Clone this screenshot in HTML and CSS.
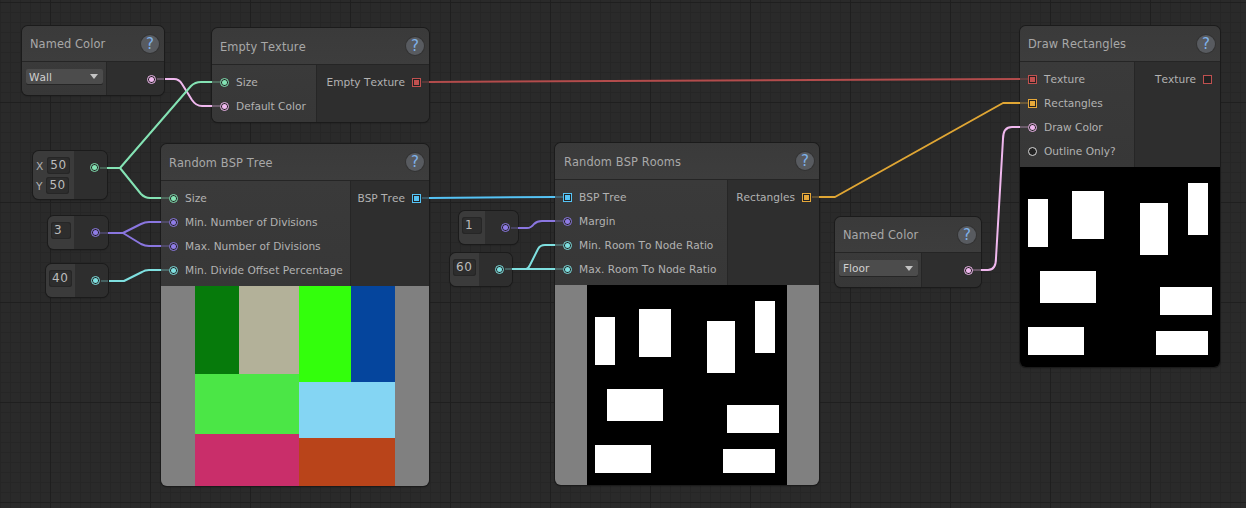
FILE: index.html
```html
<!DOCTYPE html>
<html lang="en">
<head>
  <meta charset="UTF-8">
  <meta name="viewport" content="width=device-width, initial-scale=1.0">
  <title>Texture Graph</title>
  <link rel="stylesheet" href="styles.css">
</head>
<body>

<div class="canvas">

  <div class="node n-wall">
    <div class="head"><span>Named Color</span><span class="help">?</span></div>
    <div class="body">
      <div class="left left-pick"><div class="pick"><span>Wall</span><i class="caret"></i></div></div>
      <div class="right"><div class="row"><span class="port c-pink"></span></div></div>
    </div>
  </div>

  <div class="node n-empty">
    <div class="head"><span>Empty Texture</span><span class="help">?</span></div>
    <div class="body">
      <div class="left">
        <div class="row"><span class="port c-mint"></span>Size</div>
        <div class="row"><span class="port c-pink"></span>Default Color</div>
      </div>
      <div class="right"><div class="row">Empty Texture<span class="port sq c-red"></span></div></div>
    </div>
  </div>

  <div class="node small n-xy">
    <div class="left vec">
      <div class="axis">X<span class="field">50</span></div>
      <div class="axis">Y<span class="field">50</span></div>
    </div>
    <div class="right mid"><span class="port c-mint"></span></div>
  </div>

  <div class="node small n-three">
    <div class="left top"><span class="field w-20">3</span></div>
    <div class="right mid"><span class="port c-purple"></span></div>
  </div>

  <div class="node small n-forty">
    <div class="left top"><span class="field">40</span></div>
    <div class="right mid"><span class="port c-cyan"></span></div>
  </div>

  <div class="node n-tree">
    <div class="head"><span>Random BSP Tree</span><span class="help">?</span></div>
    <div class="body">
      <div class="left">
        <div class="row"><span class="port c-mint"></span>Size</div>
        <div class="row"><span class="port c-purple"></span>Min. Number of Divisions</div>
        <div class="row"><span class="port c-purple"></span>Max. Number of Divisions</div>
        <div class="row"><span class="port c-cyan"></span>Min. Divide Offset Percentage</div>
      </div>
      <div class="right"><div class="row">BSP Tree<span class="port sq c-blue"></span></div></div>
    </div>
    <div class="preview gray">
      <div class="tex">
        <div class="cell" style="left:0;top:0;width:44px;height:88px;background:#067a0b"></div>
        <div class="cell" style="left:44px;top:0;width:60px;height:88px;background:#b3b199"></div>
        <div class="cell" style="left:104px;top:0;width:52px;height:96px;background:#33ff0c"></div>
        <div class="cell" style="left:156px;top:0;width:44px;height:96px;background:#05459d"></div>
        <div class="cell" style="left:0;top:88px;width:104px;height:60px;background:#4be646"></div>
        <div class="cell" style="left:104px;top:96px;width:96px;height:56px;background:#84d5f3"></div>
        <div class="cell" style="left:0;top:148px;width:104px;height:52px;background:#c92e6a"></div>
        <div class="cell" style="left:104px;top:152px;width:96px;height:48px;background:#b9441a"></div>
      </div>
    </div>
  </div>

  <div class="node small n-one">
    <div class="left top"><span class="field w-20">1</span></div>
    <div class="right mid"><span class="port c-purple"></span></div>
  </div>

  <div class="node small n-sixty">
    <div class="left top"><span class="field">60</span></div>
    <div class="right mid"><span class="port c-cyan"></span></div>
  </div>

  <div class="node n-rooms">
    <div class="head"><span>Random BSP Rooms</span><span class="help">?</span></div>
    <div class="body">
      <div class="left">
        <div class="row"><span class="port sq c-blue"></span>BSP Tree</div>
        <div class="row"><span class="port c-purple"></span>Margin</div>
        <div class="row"><span class="port c-cyan"></span>Min. Room To Node Ratio</div>
        <div class="row"><span class="port c-cyan"></span>Max. Room To Node Ratio</div>
      </div>
      <div class="right"><div class="row">Rectangles<span class="port sq c-orange"></span></div></div>
    </div>
    <div class="preview gray">
      <div class="tex black">
        <div class="cell white" style="left:8px;top:32px;width:20px;height:48px"></div>
        <div class="cell white" style="left:52px;top:24px;width:32px;height:48px"></div>
        <div class="cell white" style="left:120px;top:36px;width:28px;height:52px"></div>
        <div class="cell white" style="left:168px;top:16px;width:20px;height:52px"></div>
        <div class="cell white" style="left:20px;top:104px;width:56px;height:32px"></div>
        <div class="cell white" style="left:140px;top:120px;width:52px;height:28px"></div>
        <div class="cell white" style="left:8px;top:160px;width:56px;height:28px"></div>
        <div class="cell white" style="left:136px;top:164px;width:52px;height:24px"></div>
      </div>
    </div>
  </div>

  <div class="node n-floor">
    <div class="head"><span>Named Color</span><span class="help">?</span></div>
    <div class="body">
      <div class="left left-pick"><div class="pick"><span>Floor</span><i class="caret"></i></div></div>
      <div class="right"><div class="row"><span class="port c-pink"></span></div></div>
    </div>
  </div>

  <div class="node n-draw">
    <div class="head"><span>Draw Rectangles</span><span class="help">?</span></div>
    <div class="body">
      <div class="left">
        <div class="row"><span class="port sq c-red"></span>Texture</div>
        <div class="row"><span class="port sq c-orange"></span>Rectangles</div>
        <div class="row"><span class="port c-pink"></span>Draw Color</div>
        <div class="row"><span class="port hollow c-white"></span>Outline Only?</div>
      </div>
      <div class="right"><div class="row">Texture<span class="port sq hollow c-red"></span></div></div>
    </div>
    <div class="tex black">
      <div class="cell white" style="left:8px;top:32px;width:20px;height:48px"></div>
      <div class="cell white" style="left:52px;top:24px;width:32px;height:48px"></div>
      <div class="cell white" style="left:120px;top:36px;width:28px;height:52px"></div>
      <div class="cell white" style="left:168px;top:16px;width:20px;height:52px"></div>
      <div class="cell white" style="left:20px;top:104px;width:56px;height:32px"></div>
      <div class="cell white" style="left:140px;top:120px;width:52px;height:28px"></div>
      <div class="cell white" style="left:8px;top:160px;width:56px;height:28px"></div>
      <div class="cell white" style="left:136px;top:164px;width:52px;height:24px"></div>
    </div>
  </div>

  <svg class="wires" width="1246" height="508" viewBox="0 0 1246 508">
    <!-- faded bits between node edge and port -->
    <g class="stubs">
      <path stroke="#84e3b4" d="M212 82H220"/>
      <path stroke="#f0b8ee" d="M212 106H220"/>
      <path stroke="#f0b8ee" d="M157 79H164"/>
      <path stroke="#c0504f" d="M422 82H429"/>
      <path stroke="#84e3b4" d="M100 168H107"/>
      <path stroke="#84e3b4" d="M161 198H169"/>
      <path stroke="#8a76e0" d="M100 233H108"/>
      <path stroke="#8a76e0" d="M161 222H169"/>
      <path stroke="#8a76e0" d="M161 246H169"/>
      <path stroke="#7fe0e0" d="M101 281H108"/>
      <path stroke="#7fe0e0" d="M161 270H169"/>
      <path stroke="#55c3f5" d="M422 198H429"/>
      <path stroke="#55c3f5" d="M555 197H563"/>
      <path stroke="#8a76e0" d="M511 228H518"/>
      <path stroke="#8a76e0" d="M555 221H563"/>
      <path stroke="#7fe0e0" d="M505 269H512"/>
      <path stroke="#7fe0e0" d="M555 245H563"/>
      <path stroke="#7fe0e0" d="M555 269H563"/>
      <path stroke="#e6a83a" d="M812 197H819"/>
      <path stroke="#c0504f" d="M1020 79H1028"/>
      <path stroke="#e6a83a" d="M1020 103H1028"/>
      <path stroke="#f0b8ee" d="M1020 127H1028"/>
      <path stroke="#f0b8ee" d="M972 270H981"/>
    </g>
    <g class="lines">
      <path stroke="#f0b8ee" d="M165 79H174Q179 79 182 84L192 100Q196 106 202 106H212"/>
      <path stroke="#84e3b4" d="M107 168H120L191 86Q195 82 201 82H212"/>
      <path stroke="#84e3b4" d="M120 168L141 194Q145 198 150 198H161"/>
      <path stroke="#8a76e0" d="M108 233H123L141 224Q145 222 149 222H161"/>
      <path stroke="#8a76e0" d="M123 233L141 244Q145 246 149 246H161"/>
      <path stroke="#7fe0e0" d="M109 281H124L142 272Q145 270 149 270H161"/>
      <path stroke="#b34c4c" d="M429 82L1020 79"/>
      <path stroke="#55c3f5" d="M429 198L555 197"/>
      <path stroke="#8a76e0" d="M518 228H527Q531 228 534 224Q537 221 542 221H555"/>
      <path stroke="#7fe0e0" d="M512 269H526Q528 269 530 265L538 249Q540 245 545 245H555"/>
      <path stroke="#7fe0e0" d="M526 269H555"/>
      <path stroke="#e0a634" d="M819 197H835L1003 103H1020"/>
      <path stroke="#f0b8ee" d="M981 270H988Q996 270 996 258L1003 139Q1003 127 1012 127H1020"/>
    </g>
  </svg>

</div>

</body>
</html>
```

FILE: styles.css
```css
* {
  box-sizing: border-box;
}
body {
  margin: 0;
  background: #2a2a2a;
  font-family: "DejaVu Sans", sans-serif;
  overflow: hidden;
}
.canvas {
  position: relative;
  width: 1246px;
  height: 508px;
  overflow: hidden;
  background-color: #2a2a2a;
  background-image:
    linear-gradient(90deg, #1f1f1f 1.5px, transparent 1.5px),
    linear-gradient(#1f1f1f 1.5px, transparent 1.5px),
    linear-gradient(90deg, #262626 1px, transparent 1px),
    linear-gradient(#262626 1px, transparent 1px);
  background-size: 100px 100px, 100px 100px, 10px 10px, 10px 10px;
  background-position: 50px 0, 0 2px, 0 0, 0 2px;
}

/* nodes sit on a free canvas */
.node {
  position: absolute;
  z-index: 1;
  display: flex;
  flex-direction: column;
  background: #2e2e2e;
  border-radius: 6px;
  box-shadow: 0 0 0 1px #1b1b1b, 0 1px 2px rgba(0,0,0,0.4);
  overflow: hidden;
  color: #b2b2b2;
  font-size: 10.6px;
  font-kerning: none;
}
.n-wall { left: 22px; top: 26px; width: 142px; height: 69px; }
.n-empty { left: 212px; top: 28px; width: 217px; height: 94px; }
.n-tree { left: 161px; top: 144px; width: 268px; height: 342px; }
.n-rooms { left: 555px; top: 143px; width: 264px; height: 342px; }
.n-floor { left: 835px; top: 217px; width: 146px; height: 70px; }
.n-draw { left: 1020px; top: 26px; width: 200px; height: 341px; }
.n-xy { left: 33px; top: 151px; width: 74px; height: 48px; }
.n-three { left: 48px; top: 216px; width: 60px; height: 33px; }
.n-forty { left: 46px; top: 264px; width: 62px; height: 33px; }
.n-one { left: 459px; top: 211px; width: 59px; height: 33px; }
.n-sixty { left: 450px; top: 253px; width: 62px; height: 33px; }

.head {
  display: flex;
  align-items: center;
  justify-content: space-between;
  height: 37px;
  flex: none;
  padding: 1px 5px 0 8px;
  background: linear-gradient(#3a3a3a, #3d3d3d);
  border-bottom: 1px solid #252525;
  color: #a8a8a8;
  font-size: 11.4px;
  letter-spacing: 0.1px;
}
.n-wall .head, .n-draw .head, .n-floor .head {
  height: 36px;
}
.n-rooms .head {
  padding-left: 9px;
}
.help {
  width: 18px;
  height: 18px;
  margin-top: -1px;
  border-radius: 50%;
  background: #585b60;
  box-shadow: 0 0 0 1px #333;
  color: #7fb2ea;
  font-size: 15px;
  line-height: 18px;
  text-align: center;
}
.body {
  display: flex;
  flex: 1;
  min-height: 0;
}
.left {
  flex: 1;
  padding: 5px 0 0 7px;
  background: linear-gradient(#3a3a3a, #373737);
  border-right: 1px solid #262626;
}
.right {
  flex: none;
  padding: 5px 7px 0 0;
  background: #2e2e2e;
}
.row {
  display: flex;
  align-items: center;
  gap: 6px;
  height: 24px;
  white-space: nowrap;
  justify-content: flex-start;
}
.right .row {
  justify-content: flex-end;
}

/* column widths per node */
.n-wall .right { width: 57px; }
.n-floor .right { width: 59px; }
.n-empty .right { width: 112px; }
.n-tree .right { width: 78px; }
.n-rooms .right { width: 91px; }
.n-draw .right { width: 85px; }

.port {
  display: flex;
  align-items: center;
  justify-content: center;
  width: 9px;
  height: 9px;
  margin: 0 1px;
  flex: none;
  border: 1px solid currentColor;
  border-radius: 50%;
  background: #222;
}
.port::after {
  content: "";
  width: 5px;
  height: 5px;
  border-radius: 50%;
  background: currentColor;
}
.port.sq,
.port.sq::after {
  border-radius: 0;
}
.port.hollow::after {
  display: none;
}
.c-pink { color: #f0b8ee; }
.c-mint { color: #84e3b4; }
.c-purple { color: #8f7ce6; }
.c-cyan { color: #7fe0e0; }
.c-blue { color: #55c3f5; }
.c-red { color: #c0504f; }
.c-orange { color: #e6a83a; }
.c-white { color: #d8d8d8; }

.left-pick {
  padding: 7px 0 0 4px;
}
.pick {
  display: flex;
  align-items: center;
  justify-content: space-between;
  width: 77px;
  height: 15px;
  padding: 0 5px 0 3px;
  border-radius: 2px;
  background: #4c4c4c;
  box-shadow: 0 1px 0 #262626;
  color: #d0d0d0;
}
.n-floor .pick {
  width: 79px;
  height: 16px;
  padding-left: 4px;
}
.caret {
  width: 0;
  height: 0;
  border-left: 4px solid transparent;
  border-right: 4px solid transparent;
  border-top: 5px solid #c4c4c4;
}

/* little constant nodes */
.small {
  flex-direction: row;
  font-size: 12px;
}
.small .left {
  flex: none;
  padding: 0;
  border-right: 0;
  background: #3b3b3b;
}
.small .right {
  flex: 1;
  padding: 0 7px 0 0;
}
.mid {
  display: flex;
  align-items: center;
  justify-content: flex-end;
}
.n-xy .mid {
  align-items: flex-start;
  padding-top: 12px;
}
.n-xy .left { width: 41px; }
.n-three .left { width: 26px; }
.n-forty .left { width: 29px; }
.n-one .left { width: 26px; }
.n-sixty .left { width: 29px; }
.top {
  display: flex;
  justify-content: center;
  padding-top: 6px !important;
}
.vec {
  display: flex;
  flex-direction: column;
  gap: 3px;
  padding: 6px 0 0 3px !important;
}
.axis {
  display: flex;
  align-items: center;
  gap: 4px;
  height: 17px;
  font-size: 10.6px;
}
.field {
  display: block;
  width: 23px;
  height: 17px;
  border-radius: 3px;
  background: #2d2d2d;
  box-shadow: inset 0 0 0 1px #262626;
  padding-left: 3px;
  font-size: 12px;
  line-height: 17px;
  letter-spacing: 0.5px;
  color: #bcbcbc;
}
.w-20 {
  width: 20px;
}

.preview {
  display: flex;
  justify-content: center;
  flex: none;
  height: 200px;
}
.gray {
  background: #808080;
}
.tex {
  position: relative;
  width: 200px;
  height: 200px;
  flex: none;
}
.black {
  background: #000;
}
.cell {
  position: absolute;
}
.white {
  background: #fff;
}

.wires {
  position: absolute;
  left: 0;
  top: 0;
  z-index: 2;
  pointer-events: none;
}
.wires path {
  fill: none;
  stroke-width: 2;
  stroke-linejoin: round;
}
.stubs {
  opacity: 0.28;
}
```
